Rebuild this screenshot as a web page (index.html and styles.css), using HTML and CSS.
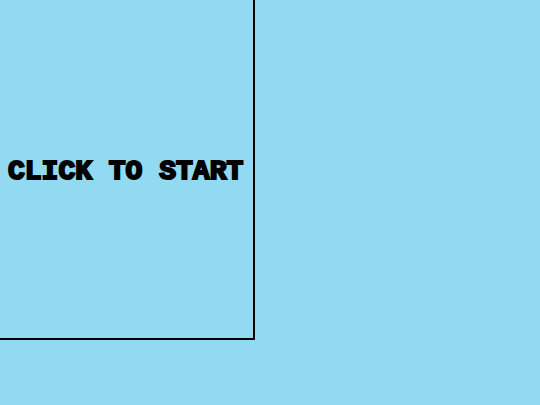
FILE: index.html
```html
<!DOCTYPE html>
<html lang="en">
<head>
<meta charset="utf-8">
<meta name="viewport" content="width=device-width, initial-scale=1">
<title>Click to start</title>
<link rel="stylesheet" href="styles.css">
</head>
<body>
<main class="stage">
<button class="start" type="button">CLICK TO START</button>
</main>
</body>
</html>
```
FILE: styles.css
```css
* {
  box-sizing: border-box;
}

body {
  margin: 0;
  min-height: 100vh;
  background: #92daf1;
}

.stage {
  display: flex;
  width: fit-content;
  height: 84vh;
  border: solid #000;
  border-width: 0 2px 2px 0;
}

.start {
  padding: 6px 10px 0 8px;
  border: 0;
  background: none;
  color: #000;
  font: bold 28px/32px "Liberation Mono", monospace;
  white-space: nowrap;
  -webkit-text-stroke: 2px #000;
  cursor: pointer;
}
```
